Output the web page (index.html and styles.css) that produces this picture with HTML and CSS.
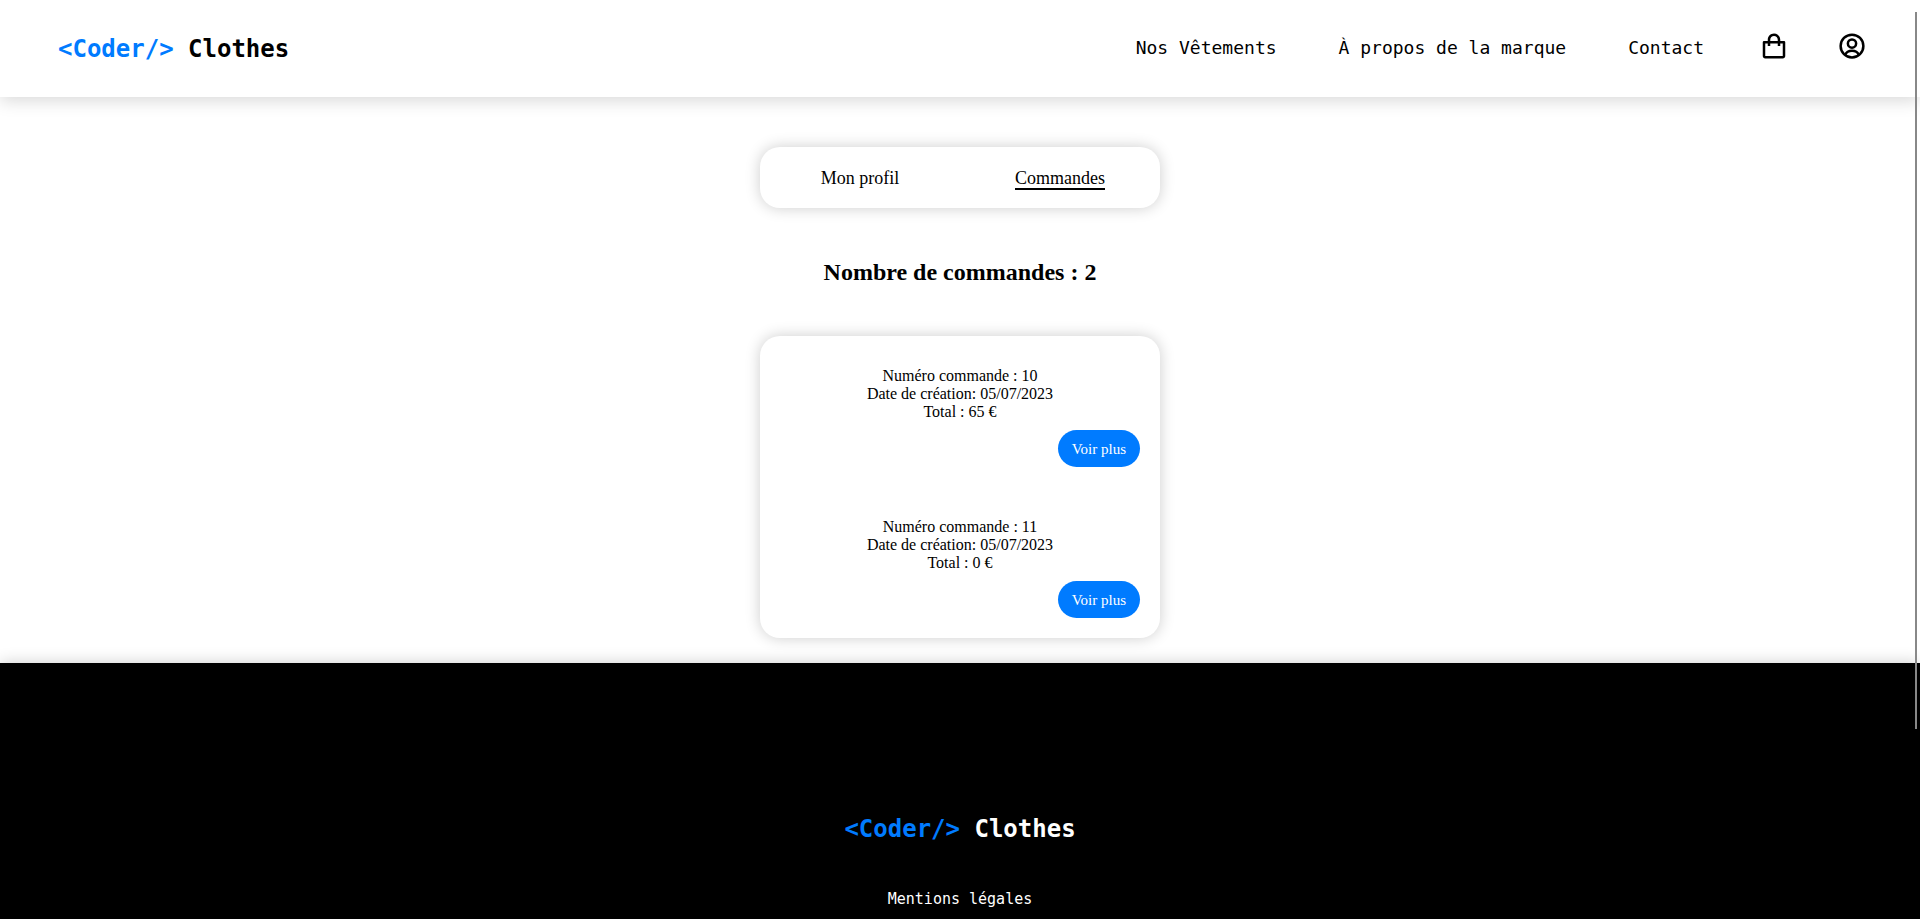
FILE: index.html
```html
<!DOCTYPE html>
<html lang="fr">
<head>
<meta charset="utf-8">
<title>Coder Clothes - Commandes</title>
<link rel="stylesheet" href="styles.css">
</head>
<body>
<header class="header">
  <a class="logo" href="#"><span class="logo-accent">&lt;Coder/&gt;</span> Clothes</a>
  <nav class="nav">
    <div class="nav-links">
      <a href="#">Nos Vêtements</a>
      <a href="#">À propos de la marque</a>
      <a href="#">Contact</a>
    </div>
    <div class="nav-icons">
      <a href="#" aria-label="Panier"><svg viewBox="0 0 24 24" class="icon"><path d="M5 22h14c1.103 0 2-.897 2-2V9a1 1 0 0 0-1-1h-3V7c0-2.757-2.243-5-5-5S7 4.243 7 7v1H4a1 1 0 0 0-1 1v11c0 1.103.897 2 2 2zM9 7c0-1.654 1.346-3 3-3s3 1.346 3 3v1H9V7zm-4 3h2v2h2v-2h6v2h2v-2h2l.002 10H5V10z"/></svg></a>
      <a href="#" aria-label="Mon compte"><svg viewBox="0 0 24 24" class="icon icon-line"><circle cx="12" cy="12" r="9.1"/><circle cx="12" cy="10" r="3.3"/><path d="M6.600 19c.9-2.200 2.700-3.200 5.400-3.200s4.500 1 5.400 3.200"/></svg></a>
    </div>
  </nav>
</header>
<main class="main">
  <nav class="tabs">
    <div class="tab"><a href="#">Mon profil</a></div>
    <div class="tab"><a class="active" href="#">Commandes</a></div>
  </nav>
  <h1 class="title">Nombre de commandes : 2</h1>
  <section class="orders">
    <article class="order">
      <p>Numéro commande : 10</p>
      <p>Date de création: 05/07/2023</p>
      <p>Total : 65 €</p>
      <button class="more" type="button">Voir plus</button>
    </article>
    <article class="order">
      <p>Numéro commande : 11</p>
      <p>Date de création: 05/07/2023</p>
      <p>Total : 0 €</p>
      <button class="more" type="button">Voir plus</button>
    </article>
  </section>
</main>
<footer class="footer">
  <a class="logo" href="#"><span class="logo-accent">&lt;Coder/&gt;</span> Clothes</a>
  <a class="legal" href="#">Mentions légales</a>
</footer>
<div class="scroll-thumb"></div>
</body>
</html>
```
FILE: styles.css
```css
* {
  box-sizing: border-box;
  margin: 0;
  padding: 0;
}

html {
  scrollbar-width: none;
}

body {
  background: #fff;
  color: #000;
  font-family: "Liberation Serif", "Times New Roman", serif;
  font-size: 16px;
  line-height: 18px;
}

a {
  color: inherit;
  text-decoration: none;
}

.header {
  display: flex;
  align-items: center;
  justify-content: space-between;
  padding: 31px 53px 30px 58px;
  box-shadow: 0 4px 16px rgba(0, 0, 0, 0.15);
}

.logo,
.nav,
.legal {
  font-family: "DejaVu Sans Mono", monospace;
}

.logo {
  font-size: 24px;
  font-weight: bold;
  line-height: 34px;
}

.logo-accent {
  color: #007bff;
}

.nav {
  display: flex;
  align-items: center;
  gap: 55px;
  font-size: 18px;
}

.nav-links {
  display: flex;
  gap: 62px;
  padding-bottom: 2px;
}

.nav-icons {
  display: flex;
  gap: 48px;
  padding-bottom: 6px;
}

.icon {
  display: block;
  width: 30px;
  height: 30px;
}

.icon-line {
  fill: none;
  stroke: #000;
  stroke-width: 2;
}

.main {
  display: flex;
  flex-direction: column;
  align-items: center;
  padding: 50px 20px 25px;
}

.tabs,
.orders {
  width: 100%;
  max-width: 400px;
  border-radius: 20px;
  box-shadow: 0 0 15px rgba(0, 0, 0, 0.2);
}

.tabs {
  display: grid;
  grid-template-columns: 1fr 1fr;
  padding: 21px 0 18px;
  font-size: 18px;
  line-height: 20px;
}

.tab {
  display: flex;
  justify-content: center;
}

.tab a {
  border-bottom: 2px solid transparent;
}

.tab .active {
  border-color: #000;
}

.title {
  margin: 50px 0;
  font-size: 24px;
  line-height: 28px;
}

.order {
  display: flex;
  flex-direction: column;
  padding: 31px 20px 20px;
  text-align: center;
}

.more {
  align-self: flex-end;
  margin-top: 9px;
  padding: 10px 14px 9px;
  border: 0;
  border-radius: 20px;
  background: #007bff;
  color: #fff;
  font: inherit;
  font-size: 15px;
}

.footer {
  display: flex;
  flex-direction: column;
  align-items: center;
  gap: 44px;
  padding: 149px 20px 150px;
  background: #000;
  color: #fff;
  box-shadow: 0 0 15px rgba(0, 0, 0, 0.2);
}

.legal {
  font-size: 15px;
}

.scroll-thumb {
  position: fixed;
  top: 12px;
  right: 3px;
  width: 2px;
  height: 78vh;
  background: #888;
}
```
